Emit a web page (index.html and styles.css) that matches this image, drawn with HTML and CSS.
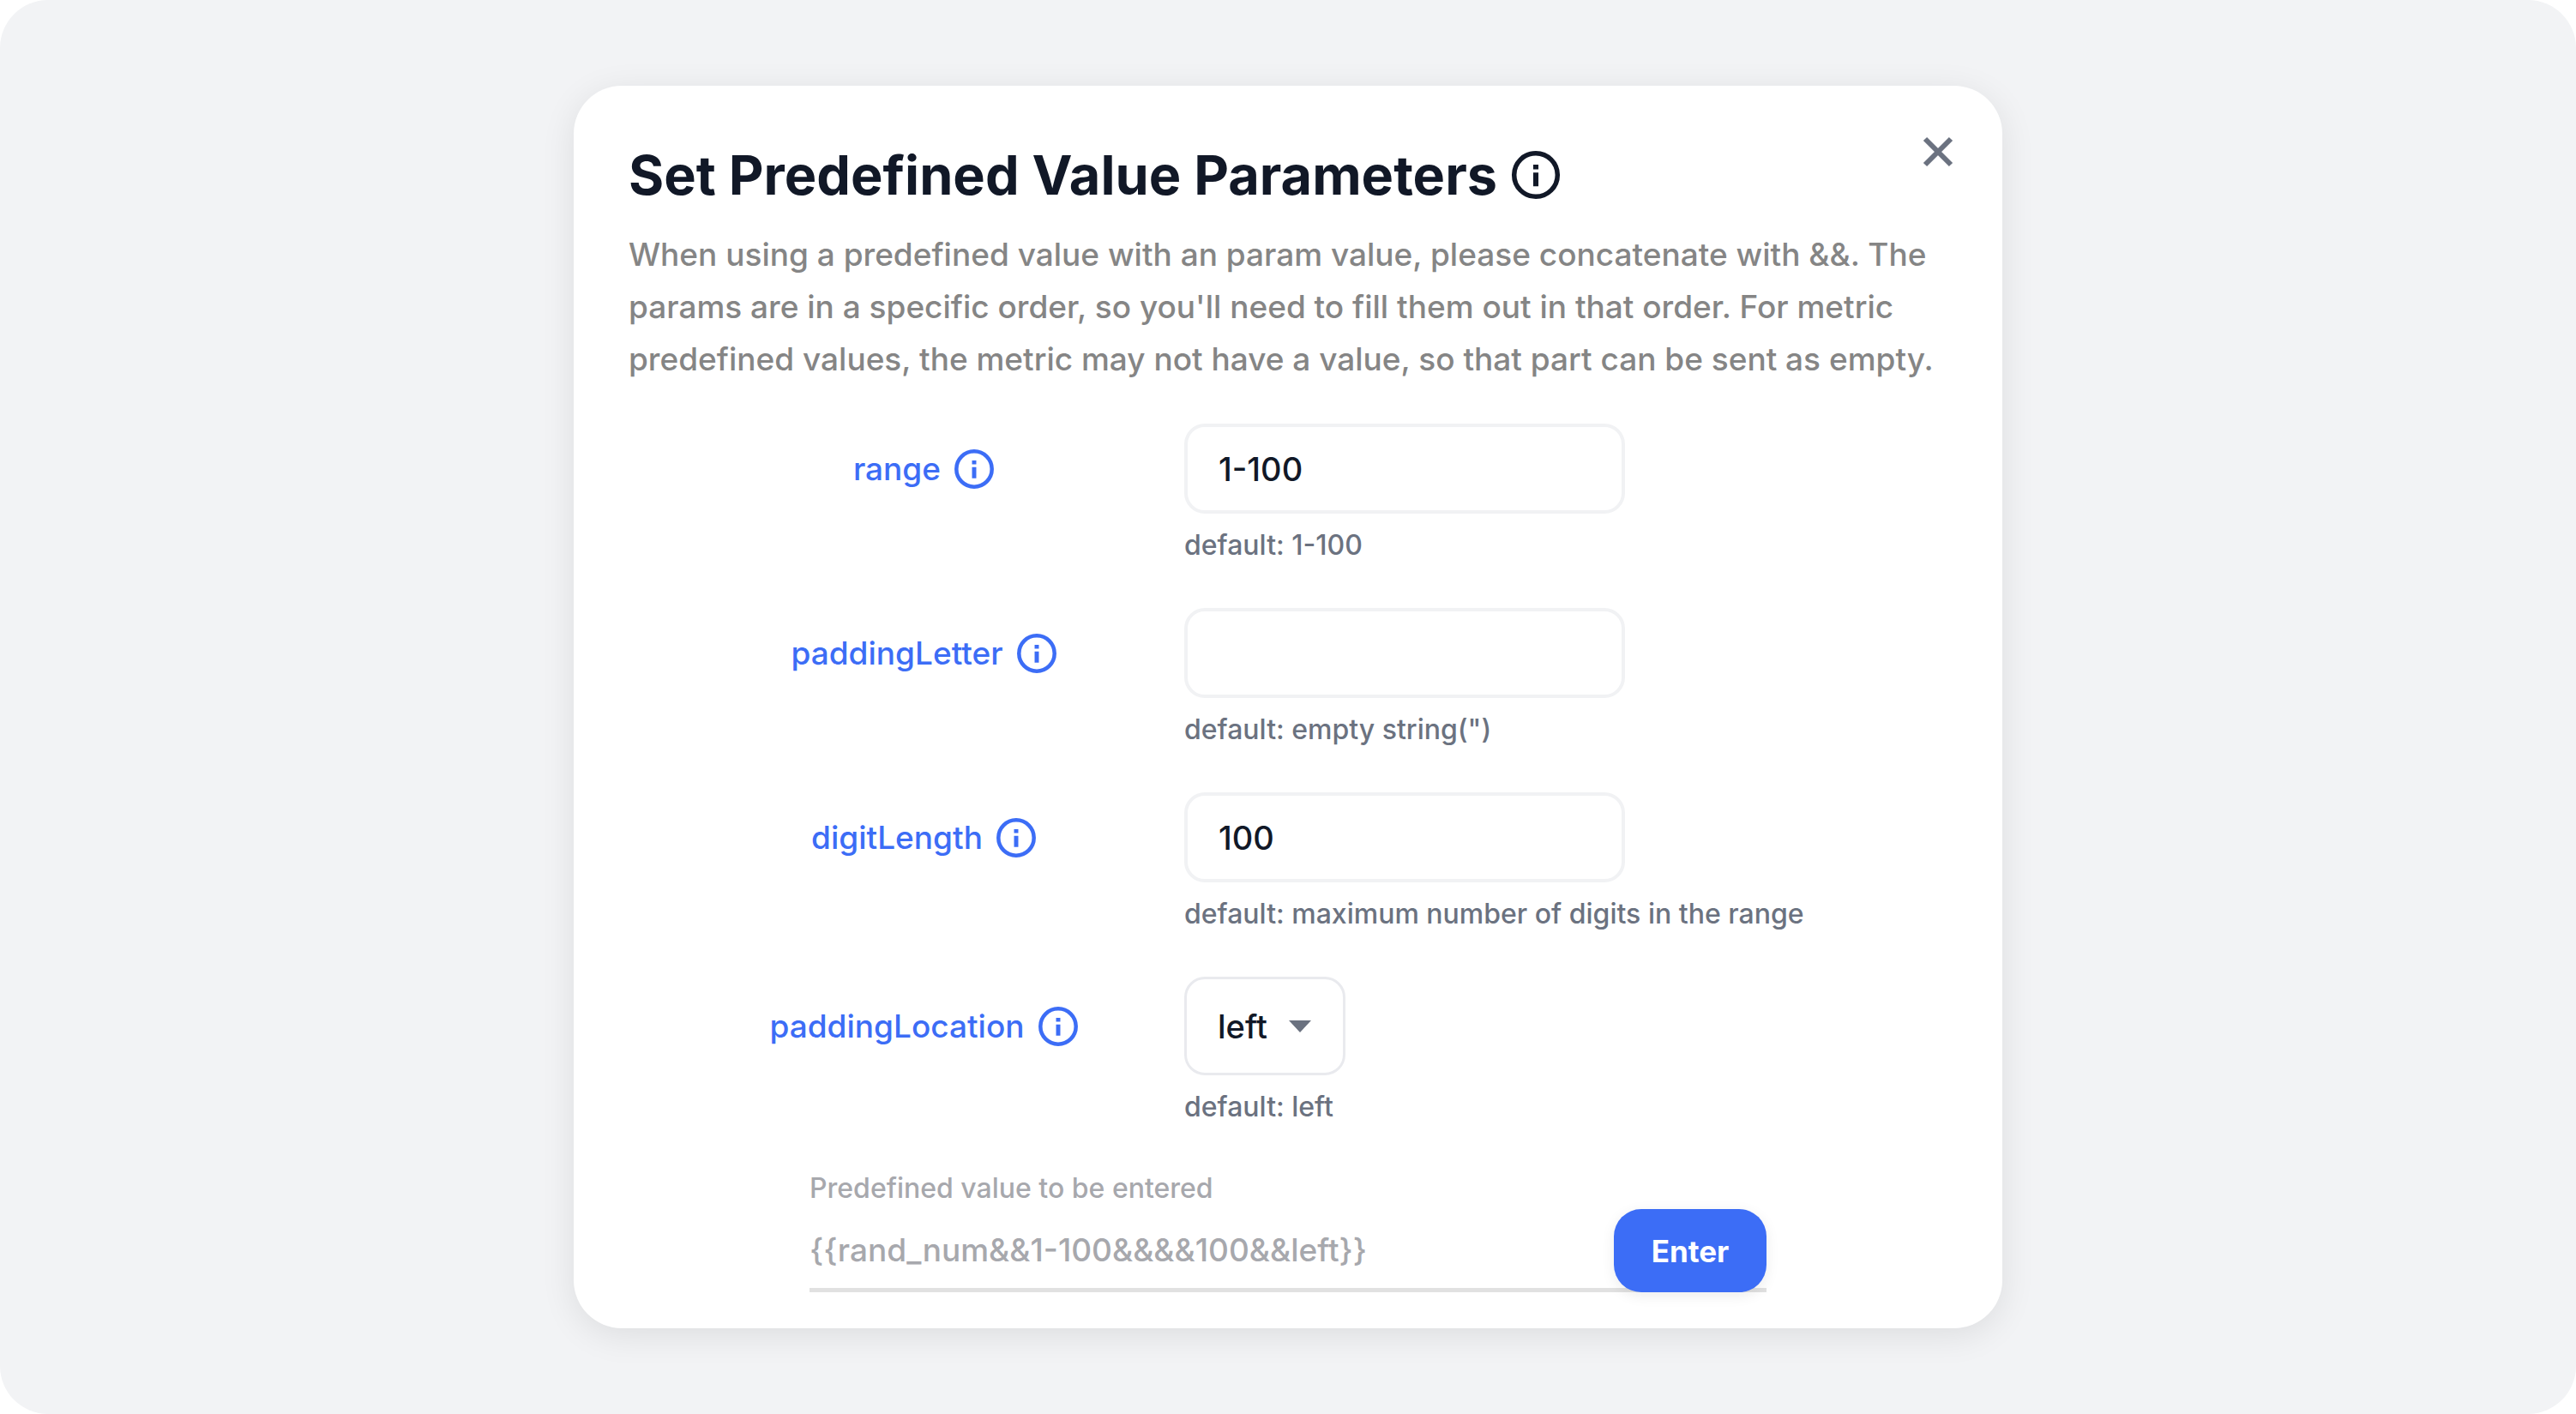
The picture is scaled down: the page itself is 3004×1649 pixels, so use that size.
FILE: index.html
```html
<!DOCTYPE html>
<html lang="en">
<head>
<meta charset="utf-8">
<title>Set Predefined Value Parameters</title>
<link rel="stylesheet" href="styles.css">
</head>
<body>
<svg class="sprite" aria-hidden="true">
  <symbol id="info" viewBox="0 0 24 24">
    <circle cx="12" cy="12" r="9.2" fill="none" stroke="currentColor" stroke-width="2"/>
    <path fill="currentColor" d="M10.900 7.600h2.200v2h-2.200zM10.900 11h2.200v5.800h-2.200z"/>
  </symbol>
  <symbol id="close" viewBox="0 0 24 24">
    <path d="M6 6l12 12M18 6L6 18" fill="none" stroke="currentColor" stroke-width="2.400"/>
  </symbol>
</svg>
<main class="page">
  <section class="dialog" role="dialog" aria-labelledby="dialog-title">
    <button class="close" type="button" aria-label="Close"><svg class="close-icon"><use href="#close"/></svg></button>
    <header class="header">
      <h1 class="title" id="dialog-title">Set Predefined Value Parameters</h1>
      <svg class="title-icon" role="img" aria-label="Info"><use href="#info"/></svg>
    </header>
    <p class="description">When using a predefined value with an param value, please concatenate with &amp;&amp;. The params are in a specific order, so you'll need to fill them out in that order. For metric predefined values, the metric may not have a value, so that part can be sent as empty.</p>
    <form class="form">
      <div class="row">
        <label class="label" for="range">range <svg class="label-icon"><use href="#info"/></svg></label>
        <div class="field">
          <input class="input" id="range" type="text" value="1-100">
          <p class="hint">default: 1-100</p>
        </div>
      </div>
      <div class="row">
        <label class="label" for="padding-letter">paddingLetter <svg class="label-icon"><use href="#info"/></svg></label>
        <div class="field">
          <input class="input" id="padding-letter" type="text" value="">
          <p class="hint">default: empty string(")</p>
        </div>
      </div>
      <div class="row">
        <label class="label" for="digit-length">digitLength <svg class="label-icon"><use href="#info"/></svg></label>
        <div class="field">
          <input class="input" id="digit-length" type="text" value="100">
          <p class="hint">default: maximum number of digits in the range</p>
        </div>
      </div>
      <div class="row">
        <label class="label label-select" for="padding-location">paddingLocation <svg class="label-icon"><use href="#info"/></svg></label>
        <div class="field">
          <div class="select-wrap">
            <select class="select" id="padding-location"><option>left</option><option>right</option></select>
            <svg class="arrow" viewBox="0 0 26 14" aria-hidden="true"><path d="M0 0h26L13 14z"/></svg>
          </div>
          <p class="hint">default: left</p>
        </div>
      </div>
      <div class="result">
        <div class="result-field">
          <label class="result-label" for="result">Predefined value to be entered</label>
          <input class="result-input" id="result" type="text" value="{{rand_num&amp;&amp;1-100&amp;&amp;&amp;&amp;100&amp;&amp;left}}" disabled>
        </div>
        <button class="enter" type="button">Enter</button>
      </div>
    </form>
  </section>
</main>
</body>
</html>
```
FILE: styles.css
```css
* { box-sizing: border-box; }

body {
  margin: 0;
  background: #fff;
  font-family: Inter, "Liberation Sans", sans-serif;
  font-weight: 500;
}

h1, p { margin: 0; }

input, select, button { font: inherit; margin: 0; }

.sprite { display: none; }

.page {
  display: flex;
  align-items: center;
  justify-content: center;
  min-height: 100vh;
  padding: 100px 32px;
  border-radius: 56px;
  background: #f2f3f5;
}

.dialog {
  position: relative;
  width: 100%;
  max-width: 1666px;
  padding: 64px 56px 42px 64px;
  border-radius: 56px;
  background: #fff;
  box-shadow: 0 8px 40px rgba(0, 0, 0, 0.09);
}

.close {
  position: absolute;
  top: 47px;
  right: 45px;
  display: flex;
  padding: 0;
  border: 0;
  background: none;
  color: #6b7280;
  cursor: pointer;
}

.close-icon { width: 60px; height: 60px; }

.header {
  display: flex;
  align-items: center;
  gap: 12px;
  color: #111827;
}

.title {
  font-size: 63px;
  line-height: 80px;
  font-weight: 700;
}

.title-icon { width: 66px; height: 66px; }

.description {
  margin-top: 22px;
  font-size: 37px;
  line-height: 61px;
  color: #858585;
}

.form { margin-top: 45px; }

.row {
  display: grid;
  grid-template-columns: 604px 1fr;
  height: 215px;
  padding-left: 44px;
}

.label {
  display: flex;
  align-items: center;
  justify-content: center;
  gap: 12px;
  height: 105px;
  font-size: 37px;
  color: #3c6df6;
}

.label-select { height: 115px; }

.label-icon { width: 54px; height: 54px; }

.field {
  display: flex;
  flex-direction: column;
  align-items: flex-start;
}

.input, .select {
  border: 4px solid #f1f2f4;
  border-radius: 24px;
  background: #fff;
  font-size: 38px;
  color: #111827;
}

.input {
  width: 514px;
  height: 105px;
  padding: 0 36px;
}

.select-wrap { position: relative; }

.select {
  display: block;
  appearance: none;
  width: 188px;
  height: 115px;
  padding: 0 36px;
  border: 3px solid #e9eaee;
}

.arrow {
  position: absolute;
  top: 51px;
  right: 40px;
  width: 26px;
  height: 14px;
  fill: #6b7280;
  pointer-events: none;
}

.hint {
  margin-top: 17px;
  font-size: 32px;
  line-height: 40px;
  color: #6b7280;
}

.result {
  display: flex;
  align-items: flex-end;
  width: 1116px;
  margin: 12px 0 0 211px;
  border-bottom: 5px solid #e1e1e1;
}

.result-field { flex: 1; }

.result-label {
  display: block;
  margin-bottom: 6px;
  font-size: 32px;
  line-height: 40px;
  color: #a7a8ad;
}

.result-input {
  display: block;
  width: 100%;
  height: 90px;
  padding: 0;
  border: 0;
  background: none;
  font-size: 37px;
  color: #a7a8ad;
}

.enter {
  width: 178px;
  height: 97px;
  margin-bottom: -5px;
  border: 0;
  border-radius: 32px;
  background: #3c6df6;
  box-shadow: 0 4px 16px rgba(0, 0, 0, 0.08);
  font-size: 35px;
  font-weight: 700;
  color: #fff;
  cursor: pointer;
}
```
